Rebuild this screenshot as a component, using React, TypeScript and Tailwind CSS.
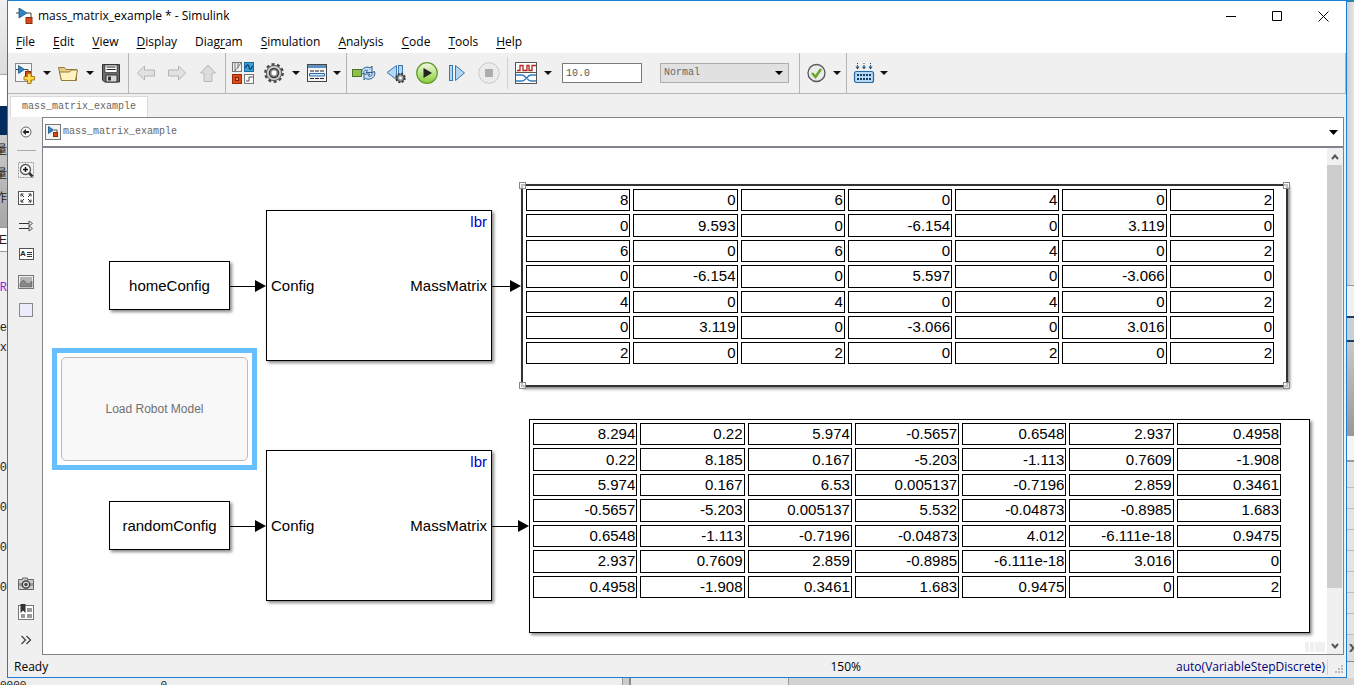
import {ReactNode} from "react";

const homeMatrix = [
  ["8", "0", "6", "0", "4", "0", "2"],
  ["0", "9.593", "0", "-6.154", "0", "3.119", "0"],
  ["6", "0", "6", "0", "4", "0", "2"],
  ["0", "-6.154", "0", "5.597", "0", "-3.066", "0"],
  ["4", "0", "4", "0", "4", "0", "2"],
  ["0", "3.119", "0", "-3.066", "0", "3.016", "0"],
  ["2", "0", "2", "0", "2", "0", "2"],
];

const randomMatrix = [
  ["8.294", "0.22", "5.974", "-0.5657", "0.6548", "2.937", "0.4958"],
  ["0.22", "8.185", "0.167", "-5.203", "-1.113", "0.7609", "-1.908"],
  ["5.974", "0.167", "6.53", "0.005137", "-0.7196", "2.859", "0.3461"],
  ["-0.5657", "-5.203", "0.005137", "5.532", "-0.04873", "-0.8985", "1.683"],
  ["0.6548", "-1.113", "-0.7196", "-0.04873", "4.012", "-6.111e-18", "0.9475"],
  ["2.937", "0.7609", "2.859", "-0.8985", "-6.111e-18", "3.016", "0"],
  ["0.4958", "-1.908", "0.3461", "1.683", "0.9475", "0", "2"],
];

const menus = [
  ["", "F", "ile"],
  ["", "E", "dit"],
  ["", "V", "iew"],
  ["", "D", "isplay"],
  ["Diag", "r", "am"],
  ["", "S", "imulation"],
  ["", "A", "nalysis"],
  ["", "C", "ode"],
  ["", "T", "ools"],
  ["", "H", "elp"],
];

const ModelGlyph = () => (
  <>
    <path d="M0 5h3M11 5h4v6" fill="none" stroke="#444" />
    <path d="M3 0v10l8-5z" fill="#2b86c5" stroke="#1c5580" strokeWidth=".8" />
    <rect x="10" y="9.5" width="6" height="6" fill="#d9481c" stroke="#8c2c0e" />
  </>
);

const NewIcon = () => (
  <svg width="22" height="22" viewBox="0 0 22 22">
    <rect x="1.5" y="1.5" width="16" height="18" fill="#f7f7f7" stroke="#8a8a8a" />
    <path d="M2 7.500h3M10 7.500h4v4" fill="none" stroke="#444" />
    <path d="M4.500 3.500v8l6-4z" fill="#2b86c5" stroke="#1c5580" strokeWidth=".8" />
    <rect x="11.500" y="9.500" width="5" height="5" fill="#d9481c" stroke="#8c2c0e" />
    <path d="M13.500 11.500h3.500v3h3.500v3.500H17v3.500h-3.500V18H10v-3.500h3.500z" fill="#ffd84d" stroke="#a87b16" />
  </svg>
);

const FolderIcon = () => (
  <svg width="22" height="22" viewBox="0 0 22 22">
    <path d="M1.500 5.500h6l1.500 2h10.500v11h-15z" fill="#e6cf83" stroke="#94793a" />
    <path d="M4.500 18.500l-2-8.500h10l2-2h6l-2 10.500z" fill="#fff3c2" stroke="#94793a" />
  </svg>
);

const SaveIcon = () => (
  <svg width="22" height="22" viewBox="0 0 22 22">
    <path d="M2.500 2.500h17v17.500h-15l-2-2z" fill="#6b6b6b" stroke="#333" />
    <rect x="5" y="3" width="12" height="7.500" fill="#fff" stroke="#333" strokeWidth=".7" />
    <path d="M6.500 5h9M6.500 7.500h9" stroke="#222" strokeWidth="1.200" />
    <path d="M6 13h11v7H6z" fill="#d8d8d8" stroke="#333" />
    <path d="M8 14.500h3v4H8z" fill="#333" />
  </svg>
);

const BackIcon = () => (
  <svg width="22" height="22" viewBox="0 0 22 22">
    <path d="M2.500 11l7-7v4h10v6h-10v4z" fill="#e2e2e2" stroke="#b4b4b4" />
  </svg>
);

const ForwardIcon = () => (
  <svg width="22" height="22" viewBox="0 0 22 22">
    <path d="M19.500 11l-7-7v4h-10v6h10v4z" fill="#e2e2e2" stroke="#b4b4b4" />
  </svg>
);

const UpIcon = () => (
  <svg width="22" height="22" viewBox="0 0 22 22">
    <path d="M11 3l7.500 8h-3.500v8.500H7V11H3.500z" fill="#dcdcdc" stroke="#b9b9b9" />
  </svg>
);

const LibraryIcon = () => (
  <svg width="22" height="22" viewBox="0 0 22 22">
    <rect x=".5" y=".5" width="9" height="9" fill="#f1f1f1" stroke="#777" />
    <path d="M3 1v8l6-8M6 1v5" fill="none" stroke="#777" />
    <rect x="12.500" y=".5" width="9" height="9" fill="#3aa0d8" stroke="#1b6a9c" />
    <path d="M13.500 6c1-4 3-4 3.500-1s2 3 3.500-1" fill="none" stroke="#0b3f66" strokeWidth="1.200" />
    <rect x=".5" y="12.500" width="9" height="9" fill="#dc4a1a" stroke="#9a2c0a" />
    <rect x="3.500" y="15.500" width="3" height="3" fill="#f58a60" stroke="#7c2006" />
    <rect x="12.500" y="12.500" width="9" height="9" fill="#f8f8f8" stroke="#777" />
    <path d="M14 19h3v-4h4" fill="none" stroke="#555" />
  </svg>
);

const GearIcon = () => (
  <svg width="22" height="22" viewBox="0 0 22 22">
    <circle cx="11" cy="11" r="8.700" fill="none" stroke="#4a4a4a" strokeWidth="2.400" strokeDasharray="3 2.466" />
    <circle cx="11" cy="11" r="7.600" fill="#cecece" stroke="#555" />
    <circle cx="11" cy="11" r="4.500" fill="#999" stroke="#3c3c3c" strokeWidth="1.500" />
    <circle cx="11" cy="11" r="2.400" fill="#fff" />
  </svg>
);

const ExplorerIcon = () => (
  <svg width="22" height="22" viewBox="0 0 22 22">
    <rect x="1.500" y="2.500" width="19" height="17" fill="#f5f5f5" stroke="#444" />
    <rect x="2" y="3" width="18" height="3" fill="#5f8fbe" />
    <path d="M4 9h4M9 9h4M14 9h4M4 16.500h4M9 16.500h4M14 16.500h4" stroke="#222" strokeWidth="1.200" />
    <path d="M3.500 11.500h15v2.500h-15z" fill="#cfe6fa" stroke="#2c6ba5" />
  </svg>
);

const FastRestartIcon = () => (
  <svg width="24" height="22" viewBox="0 0 24 22">
    <rect x=".5" y="7.500" width="9" height="7" fill="#8fc04c" stroke="#4c7426" />
    <path d="M9.500 12c-1-5 4-8.500 9-6l1.500-2v6.500h-6l1.500-2c-2.500-1-4 .500-3.500 3z" fill="#c4dff5" stroke="#2c5f92" />
    <path d="M22.500 9.500c2 5-4 9.500-9 7l-1.500 1.500V12h6l-1.500 2c2.500 1 4-1 3.500-3.500z" fill="#c4dff5" stroke="#2c5f92" />
  </svg>
);

const StepBackIcon = () => (
  <svg width="22" height="22" viewBox="0 0 22 22">
    <path d="M11.500 3.500v14L2 10.500z" fill="#b4d6f0" stroke="#3b78ad" />
    <rect x="13.500" y="3.500" width="4" height="12" fill="#b4d6f0" stroke="#3b78ad" />
    <circle cx="15.500" cy="16" r="4.300" fill="none" stroke="#333" strokeWidth="1.800" strokeDasharray="2 1.370" />
    <circle cx="15.500" cy="16" r="3.600" fill="#999" stroke="#444" />
    <circle cx="15.500" cy="16" r="1.400" fill="#fff" />
  </svg>
);

const RunIcon = () => (
  <svg width="22" height="22" viewBox="0 0 22 22">
    <defs>
      <linearGradient id="run" x2="0" y2="1">
        <stop offset="0" stopColor="#f4fbe6" />
        <stop offset="1" stopColor="#86cc33" />
      </linearGradient>
    </defs>
    <circle cx="11" cy="11" r="10.300" fill="url(#run)" stroke="#639a2c" strokeWidth="1.200" />
    <path d="M7.500 6v10l8.500-5z" fill="#222" />
  </svg>
);

const StepForwardIcon = () => (
  <svg width="22" height="22" viewBox="0 0 22 22">
    <rect x="2.500" y="3.500" width="3" height="15" fill="#b4d6f0" stroke="#3b78ad" />
    <path d="M8.500 3.500v15l9-7.500z" fill="#b4d6f0" stroke="#3b78ad" />
  </svg>
);

const StopIcon = () => (
  <svg width="22" height="22" viewBox="0 0 22 22">
    <circle cx="11" cy="11" r="10.300" fill="#ebebeb" stroke="#c9c9c9" />
    <rect x="7" y="7" width="8" height="8" fill="#acacac" />
  </svg>
);

const ScopeIcon = () => (
  <svg width="22" height="22" viewBox="0 0 22 22">
    <rect x=".5" y=".5" width="21" height="21" fill="#fff" stroke="#555" />
    <path d="M1 10.500h20" stroke="#555" />
    <path d="M2 8.500h3v-5h3v5h4v-5h2v5h3v-5h4" fill="none" stroke="#b3261e" strokeWidth="1.300" />
    <path d="M1 13h6c4 0 5 6 9 6h5M1 19h6c4 0 5-6 9-6h5" fill="none" stroke="#2f7dc1" strokeWidth="1.300" />
  </svg>
);

const AdvisorIcon = () => (
  <svg width="22" height="22" viewBox="0 0 22 22">
    <circle cx="10.500" cy="11" r="8.500" fill="#ececec" stroke="#555" strokeWidth="1.300" />
    <path d="M6 11l3.500 4 5.500-8" fill="none" stroke="#68a52c" strokeWidth="2.600" />
  </svg>
);

const BuildIcon = () => (
  <svg width="22" height="22" viewBox="0 0 22 22">
    <path d="M4.500 1v5M11 1v5M17.500 1v5" stroke="#164a73" strokeDasharray="1 1" />
    <path d="M2.500 4.500h4l-2 3zM9 4.500h4l-2 3zM15.500 4.500h4l-2 3z" fill="#164a73" />
    <rect x="1.500" y="9.500" width="19" height="11" rx="2" fill="#b5daf6" stroke="#2b679b" strokeWidth="1.200" />
    <path d="M4 13h14M4 17h14" stroke="#173f63" strokeWidth="2" strokeDasharray="2 1" />
  </svg>
);

const Caret = ({label}: { label: string }) => (
  <button aria-label={label} className="flex h-[22px] w-[21px] shrink-0 items-center justify-center last:w-[18px]">
    <svg width="8" height="4" viewBox="0 0 8 4"><path d="M0 0h8L4 4z" fill="#111" /></svg>
  </button>
);

const Tool = ({label, children}: { label: string; children: ReactNode }) => (
  <button aria-label={label} className="shrink-0">{children}</button>
);

const Toolbar = () => (
  <div className="flex h-[42px] shrink-0 border-y border-t-white border-b-[#b4b4b4] bg-[#f0f0f0]">
    <div className="flex items-center border-r border-[#b4b4b4] pr-1.5 pl-1.5">
      <Tool label="New model"><NewIcon /></Tool>
      <Caret label="New options" />
      <Tool label="Open"><FolderIcon /></Tool>
      <Caret label="Open recent" />
      <Tool label="Save"><SaveIcon /></Tool>
    </div>
    <div className="flex items-center gap-[9px] border-r border-[#b4b4b4] px-1.5">
      <Tool label="Back"><BackIcon /></Tool>
      <Tool label="Forward"><ForwardIcon /></Tool>
      <Tool label="Up"><UpIcon /></Tool>
    </div>
    <div className="flex items-center border-r border-[#b4b4b4] pl-1.5">
      <Tool label="Library browser"><LibraryIcon /></Tool>
      <div className="w-[9px]" />
      <Tool label="Configuration"><GearIcon /></Tool>
      <Caret label="Configuration options" />
      <Tool label="Model explorer"><ExplorerIcon /></Tool>
      <Caret label="Explorer options" />
    </div>
    <div className="flex items-center border-r border-[#b4b4b4] pr-2.5 pl-[5px]">
      <div className="flex items-center gap-[9px]">
        <Tool label="Fast restart"><FastRestartIcon /></Tool>
        <Tool label="Step back"><StepBackIcon /></Tool>
        <Tool label="Run"><RunIcon /></Tool>
        <Tool label="Step forward"><StepForwardIcon /></Tool>
        <Tool label="Stop"><StopIcon /></Tool>
      </div>
      <div className="mx-[7px] h-8 w-px bg-[#d0d0d0]" />
      <Tool label="Data inspector"><ScopeIcon /></Tool>
      <Caret label="Inspector options" />
      <input
        aria-label="Stop time"
        defaultValue="10.0"
        className="ml-1 h-5 w-20 border border-[#7a7a7a] bg-white px-[3px] font-['Liberation_Mono',monospace] text-[10px] text-[#555]"
      />
      <div className="relative ml-[18px]">
        <select
          aria-label="Simulation mode"
          className="block h-5 w-[129px] appearance-none border border-[#adadad] bg-[#e1e1e1] px-[3px] font-['Liberation_Mono',monospace] text-[10px] text-[#666]">
          <option>Normal</option>
        </select>
        <svg className="pointer-events-none absolute top-2 right-1.5" width="8" height="4" viewBox="0 0 8 4">
          <path d="M0 0h8L4 4z" fill="#000" />
        </svg>
      </div>
    </div>
    <div className="flex items-center border-r border-[#b4b4b4] pl-1.5">
      <Tool label="Model advisor"><AdvisorIcon /></Tool>
      <Caret label="Advisor options" />
    </div>
    <div className="flex grow items-center border-r border-[#b4b4b4] pl-1.5">
      <Tool label="Build"><BuildIcon /></Tool>
      <Caret label="Build options" />
    </div>
  </div>
);

const Palette = () => (
  <nav aria-label="Palette" className="flex w-[34px] shrink-0 flex-col items-center bg-[#f0f0f0] pt-[7px] pb-[7px] pl-0.5">
    <button aria-label="Hide browser" className="mb-2.5">
      <svg width="16" height="16" viewBox="0 0 16 16">
        <circle cx="8" cy="8" r="5" fill="#f6f6f6" stroke="#666" />
        <path d="M11 8H7" stroke="#222" strokeWidth="2" />
        <path d="M4.500 8L8 5v6z" fill="#222" />
      </svg>
    </button>
    <div className="mb-[11px] h-px w-[19px] bg-[#aaa]" />
    <div className="flex flex-col gap-3">
      <button aria-label="Zoom">
        <svg width="16" height="16" viewBox="0 0 16 16">
          <rect x=".5" y=".5" width="15" height="15" fill="none" stroke="#999" strokeDasharray="2 1" />
          <path d="M10.500 10.500l4 4" stroke="#333" strokeWidth="2.500" />
          <circle cx="7.500" cy="7.500" r="5" fill="#fff" stroke="#555" strokeWidth="1.300" />
          <path d="M5 7.500h5M7.500 5v5" stroke="#111" strokeWidth="1.500" />
        </svg>
      </button>
      <button aria-label="Fit to view">
        <svg width="16" height="16" viewBox="0 0 16 16">
          <rect x=".5" y="1.500" width="15" height="13" fill="#fff" stroke="#555" />
          <path d="M3 6.500V4h2.500M3 4l3 3M10.500 4H13v2.500M13 4l-3 3M3 9.500V12h2.500M3 12l3-3M10.500 12H13V9.500M13 12l-3-3" fill="none" stroke="#333" />
        </svg>
      </button>
      <button aria-label="Signal lines">
        <svg width="16" height="16" viewBox="0 0 16 16">
          <path d="M1 5.500h12M1 10.500h12" stroke="#333" strokeWidth="1.200" />
          <path d="M11 3l3.500 2.500L11 8zM11 8l3.500 2.500L11 13z" fill="#fff" stroke="#555" />
        </svg>
      </button>
      <button aria-label="Annotation" className="flex h-4 w-4 items-center justify-center">
        <span className="flex h-3 w-[15px] items-center justify-center gap-px border border-[#555] bg-white font-['Liberation_Sans',sans-serif] text-[8px] leading-none font-bold text-[#222]">
          A
          <svg width="5" height="7" viewBox="0 0 5 7"><path d="M0 1.500h5M0 3.500h5M0 5.500h5" stroke="#333" /></svg>
        </span>
      </button>
      <button aria-label="Image">
        <svg width="16" height="16" viewBox="0 0 16 16">
          <rect x=".5" y="1.500" width="15" height="13" fill="#eee" stroke="#777" />
          <rect x="2" y="3" width="12" height="10" fill="#b4b4b4" />
          <path d="M2 10c3-6 5-3 6-1s4 1 6-2v6H2z" fill="#888" stroke="#555" strokeWidth=".6" />
        </svg>
      </button>
      <button aria-label="Area">
        <svg width="16" height="16" viewBox="0 0 16 16">
          <rect x="1.500" y="1.500" width="13" height="13" fill="#ebebfa" stroke="#888" />
        </svg>
      </button>
    </div>
    <div className="mt-auto flex flex-col gap-3">
      <button aria-label="Screenshot">
        <svg width="16" height="16" viewBox="0 0 16 16">
          <path d="M.5 3.500h4V2h5v1.500h6v10H.5z" fill="#ccc" stroke="#666" />
          <path d="M1 7h14v3H1z" fill="#999" />
          <circle cx="8" cy="8.500" r="3.700" fill="#ddd" stroke="#333" strokeWidth="1.300" />
          <circle cx="8" cy="8.500" r="1.700" fill="#444" />
        </svg>
      </button>
      <button aria-label="Model browser">
        <svg width="16" height="16" viewBox="0 0 16 16">
          <rect x=".5" y="1.500" width="15" height="14" fill="#fff" stroke="#777" />
          <path d="M9 4h5v4H9zM9 10h5v4H9zM3 10h4v4H3z" fill="#999" />
          <path d="M2.500 0h5v9L5 6.500 2.500 9z" fill="#333" />
        </svg>
      </button>
      <button aria-label="More">
        <svg width="16" height="16" viewBox="0 0 16 16">
          <path d="M3.500 4l4 4-4 4M8.500 4l4 4-4 4" fill="none" stroke="#444" strokeWidth="1.300" />
        </svg>
      </button>
    </div>
  </nav>
);

const Matrix = ({label, rows}: { label: string; rows: string[][] }) => (
  <table aria-label={label} className="h-[181px] w-[754px] table-fixed border-separate border-spacing-[3px]">
    <tbody>
      {rows.map((row, i) => (
        <tr key={i}>
          {row.map((value, j) => (
            <td key={j} className="border border-black p-0 pr-px text-right leading-5">{value}</td>
          ))}
        </tr>
      ))}
    </tbody>
  </table>
);

const RobotBlock = () => (
  <div className="flex h-[151px] w-[226px] flex-col border border-black bg-white px-1 shadow-[2px_2px_3px_#888]">
    <div className="text-right leading-[22px] text-[#0000c8]">lbr</div>
    <div className="flex grow items-center justify-between pb-[22px]">
      <span>Config</span>
      <span>MassMatrix</span>
    </div>
  </div>
);

const ConfigBlock = ({name}: { name: string }) => (
  <div className="flex h-[49px] w-[121px] items-center justify-center border border-black bg-white shadow-[2px_2px_3px_#888]">
    {name}
  </div>
);

const Wires = () => (
  <svg className="absolute top-0 left-0" width="500" height="420" viewBox="0 0 500 420">
    <path d="M187 138.500h27M449 138.500h20M187 378.500h27M449 378.500h28" stroke="#000" />
    <path d="M212 132v12l11-6zM467 132v12l11-6zM212 372v12l11-6zM475 372v12l11-6z" fill="#000" />
  </svg>
);

const handle = "absolute size-[7px] border border-[#888] bg-white/70";

const Canvas = () => (
  <div className="relative min-h-[506px] grow overflow-hidden bg-white font-['Liberation_Sans',sans-serif] text-[15px] text-black">
    <div className="absolute top-[113px] left-[66px]"><ConfigBlock name="homeConfig" /></div>
    <div className="absolute top-[353px] left-[66px]"><ConfigBlock name="randomConfig" /></div>
    <div className="absolute top-[62px] left-[223px]"><RobotBlock /></div>
    <div className="absolute top-[302px] left-[223px]"><RobotBlock /></div>
    <div className="absolute top-[200px] left-[9px] flex h-[122px] w-[205px] border-[5px] border-[#66c0ff] p-1">
      <button className="grow rounded-[5px] border border-[#bbb] bg-[#f8f8f8] text-xs text-[#707070]">Load Robot Model</button>
    </div>
    <div className="absolute top-[36px] left-[478px] h-[203px] w-[767px] border-2 border-[#333] bg-white shadow-[2px_2px_3px_#888]">
      <Matrix label="homeConfig mass matrix" rows={homeMatrix} />
      <span className={`${handle} -top-1 -left-1`} />
      <span className={`${handle} -top-1 -right-1`} />
      <span className={`${handle} -bottom-1 -left-1`} />
      <span className={`${handle} -right-1 -bottom-1`} />
    </div>
    <div className="absolute top-[271px] left-[486px] h-[214px] w-[781px] border border-black bg-white shadow-[2px_2px_3px_#888]">
      <Matrix label="randomConfig mass matrix" rows={randomMatrix} />
    </div>
    <Wires />
    <div className="absolute right-0.5 bottom-0.5 flex gap-px">
      <span className="h-2.5 w-1 bg-[#f0f0f0]" />
      <span className="h-2.5 w-1 bg-[#f0f0f0]" />
      <span className="h-2.5 w-2.5 bg-[#f0f0f0]" />
    </div>
  </div>
);

const ScrollBar = () => (
  <div className="mr-px flex w-[15px] shrink-0 flex-col bg-[#f0f0f0]">
    <button aria-label="Scroll up" className="flex h-[17px] items-center justify-center">
      <svg width="8" height="6" viewBox="0 0 8 6"><path d="M1 5l3-3.500L7 5" fill="none" stroke="#555" strokeWidth="2" /></svg>
    </button>
    <div className="mb-[49px] grow bg-[#cdcdcd]" />
    <button aria-label="Scroll down" className="flex h-[17px] items-center justify-center">
      <svg width="8" height="6" viewBox="0 0 8 6"><path d="M1 1l3 3.500L7 1" fill="none" stroke="#555" strokeWidth="2" /></svg>
    </button>
  </div>
);

const LeftBackdrop = () => (
  <div className="flex w-[7px] shrink-0 flex-col items-end overflow-hidden bg-[#eee] font-['Liberation_Mono','Noto_Sans_CJK_SC',monospace] text-xs leading-5 text-[#222]">
    <div className="h-[75px] w-full border-b border-[#aaa] bg-linear-to-b from-[#f0f0f0] to-[#dcdcdc]" />
    <div className="h-[31px] w-full bg-white" />
    <div className="h-[29px] w-full bg-[#002b5c]" />
    <div className="flex h-[92px] w-full flex-col items-end bg-linear-to-b from-[#ccc] to-[#a6a6a6] pt-1.5">
      <span className="h-6">量</span>
      <span className="h-6">量</span>
      <span className="h-6">作</span>
    </div>
    <div className="flex h-[25px] w-full justify-end border-y border-[#999] bg-white font-['Liberation_Sans',sans-serif] leading-6">AE</div>
    <div className="mt-[26px] h-10 text-[#9a20e0]">R</div>
    <div className="h-5">e</div>
    <div className="h-[120px]">x</div>
    <div className="h-10">0</div>
    <div className="h-10">0</div>
    <div className="h-10">0</div>
    <div className="h-10">0</div>
  </div>
);

const RightBackdrop = () => (
  <div className="flex w-[7px] shrink-0 flex-col border-t-2 border-[#2a86a8] bg-[#e4e4e4]">
    <div className="h-[283px] bg-linear-to-r from-[#cfcfcf] to-[#e6e6e6]" />
    <div className="h-[31px] border-t border-[#999] bg-[#f0f0f0]" />
    <div className="h-[26px] border-y-2 border-[#1d3f66] bg-[#c8d0d8]" />
    <div className="h-[94px] bg-linear-to-b from-[#c8c8c8] to-[#999]" />
    <div className="h-[26px] border-b-2 border-[#999] bg-[#f4f4f4]" />
    <div className="h-[26px] border-b border-[#bbb]" />
    <div className="h-[21px] border-b border-[#bbb]" />
    <div className="h-[21px] border-b border-[#bbb]" />
    <div className="h-[21px] border-b border-[#bbb]" />
    <div className="h-[21px] border-b border-[#bbb]" />
    <div className="h-[21px] border-b border-[#bbb]" />
    <div className="h-[21px] border-b border-[#bbb]" />
    <div className="h-[21px] border-b border-[#bbb]" />
    <div className="flex h-[27px] items-center border-b border-[#888] bg-[#ddd]">
      <svg width="7" height="8" viewBox="0 0 7 8"><path d="M3 0l3.500 4L3 8" fill="none" stroke="#555" strokeWidth="2" /></svg>
    </div>
  </div>
);

export default function App() {
  return (
    <div className="flex min-h-screen flex-col overflow-hidden bg-[#e3e3e3] font-['Open_Sans',sans-serif] text-xs text-black">
      <div className="flex grow">
        <LeftBackdrop />
        <main className="flex min-w-0 grow flex-col border border-[#1a7fd4] bg-[#f0f0f0]">
          <header className="flex h-[30px] shrink-0 items-center bg-white pl-2">
            <svg width="17" height="17" viewBox="0 0 17 17"><ModelGlyph /></svg>
            <h1 className="ml-[5px]">mass_matrix_example * - Simulink</h1>
            <div className="ml-auto flex">
              <button aria-label="Minimize" className="flex w-[46px] justify-center">
                <svg width="11" height="11" viewBox="0 0 11 11"><path d="M0 5.500h10" stroke="#000" /></svg>
              </button>
              <button aria-label="Maximize" className="flex w-[46px] justify-center">
                <svg width="11" height="11" viewBox="0 0 11 11"><path d="M.5.500h9v9h-9z" fill="none" stroke="#000" /></svg>
              </button>
              <button aria-label="Close" className="flex w-[46px] justify-center">
                <svg width="11" height="11" viewBox="0 0 11 11"><path d="M.5.500l10 10M10.500.500l-10 10" stroke="#000" /></svg>
              </button>
            </div>
          </header>
          <nav aria-label="Menu" className="flex h-[21px] shrink-0 items-center gap-[18px] bg-white pl-2">
            {menus.map(([before, key, after]) => (
              <button key={before + key + after} className="leading-5">
                {before}<u className="underline-offset-2">{key}</u>{after}
              </button>
            ))}
          </nav>
          <Toolbar />
          <div className="flex h-[23px] shrink-0 items-end pl-0.5">
            <button className="h-[21px] w-[138px] border border-b-0 border-[#dadada] bg-white font-['Liberation_Mono',monospace] text-[10px] text-[#666]">
              mass_matrix_example
            </button>
          </div>
          <div className="flex grow">
            <Palette />
            <section className="mr-0.5 flex min-w-0 grow flex-col border border-[#82828c]">
              <div className="flex h-[30px] shrink-0 items-center border-b-2 border-[#82828c] bg-white pr-1 pl-0.5">
                <svg width="16" height="16" viewBox="0 0 16 16">
                  <rect x=".5" y=".5" width="15" height="15" fill="#f3f3f3" stroke="#777" />
                  <path d="M9 6h3v3" fill="none" stroke="#555" />
                  <path d="M3.500 2.500v7l5-3.500z" fill="#2b86c5" stroke="#1c5580" strokeWidth=".8" />
                  <rect x="8.500" y="8.500" width="4" height="4" fill="#d9481c" stroke="#8c2c0e" />
                </svg>
                <a href="#model" className="ml-0.5 font-['Liberation_Mono',monospace] text-[10px] text-[#666]">mass_matrix_example</a>
                <button aria-label="Path history" className="mr-px ml-auto">
                  <svg width="9" height="5" viewBox="0 0 9 5"><path d="M0 0h9L4.500 5z" fill="#000" /></svg>
                </button>
              </div>
              <div className="flex grow">
                <Canvas />
                <ScrollBar />
              </div>
            </section>
          </div>
          <footer className="flex h-[22px] shrink-0 items-center pt-0.5 pl-1.5">
            <span className="grow">Ready</span>
            <span>150%</span>
            <span className="w-[467px] border-r border-[#d5d5d5] pr-0.5 text-right text-[#00007c]">auto(VariableStepDiscrete)</span>
            <svg className="mt-1.5 ml-1.5" width="12" height="12" viewBox="0 0 12 12">
              <path d="M7 1h2v2H7zM4 4h2v2H4zM7 4h2v2H7zM1 7h2v2H1zM4 7h2v2H4zM7 7h2v2H7z" fill="#bbb" />
            </svg>
          </footer>
        </main>
        <RightBackdrop />
      </div>
      <div className="flex h-[7px] shrink-0 overflow-hidden font-['Liberation_Mono',monospace] text-[11px] leading-[14px] text-[#222]">
        <div className="flex w-[623px] gap-[134px] border-r border-[#999] bg-[#eee]">
          <span>0000</span>
          <span>0</span>
        </div>
        <div className="w-2 border-r-2 border-[#888] bg-[#ccc]" />
        <div className="w-[158px] border-r border-[#999] bg-[#e8e8e8]" />
        <div className="grow bg-[#d2d2d2]" />
      </div>
    </div>
  );
}
